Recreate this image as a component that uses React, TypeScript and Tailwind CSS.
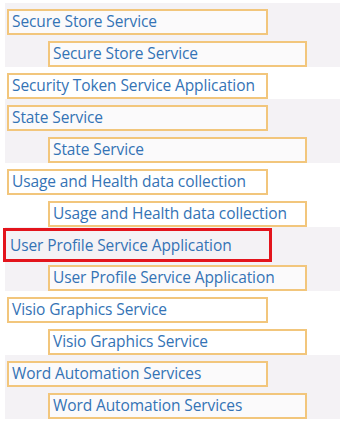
import React from 'react';

type Group = { name: string; child: boolean; shaded: boolean; highlight?: boolean };

const groups: Group[] = [
    { name: 'Secure Store Service', child: true, shaded: true },
    { name: 'Security Token Service Application', child: false, shaded: false },
    { name: 'State Service', child: true, shaded: true },
    { name: 'Usage and Health data collection', child: true, shaded: false },
    { name: 'User Profile Service Application', child: true, shaded: true, highlight: true },
    { name: 'Visio Graphics Service', child: true, shaded: false },
    { name: 'Word Automation Services', child: true, shaded: true },
];

const Box = ({ label, indent, highlight }: { label: string; indent?: boolean; highlight?: boolean }) => (
    <div className={`h-[32px] pt-[6px] ${indent ? 'pl-[48px]' : 'pl-[7px]'}`}>
        <div
            className={`relative h-[26px] flex items-center px-[3px] text-[15.5px] tracking-[-0.1px] text-[#3473b5] ${
                indent ? 'w-[259px]' : 'w-[261px]'
            } ${highlight ? '' : 'border-2 border-[#f2c67c] bg-white/60'}`}
        >
            <span className="whitespace-nowrap">{label}</span>
            {highlight && (
                <div className="absolute -left-[4px] -top-[5px] w-[269px] h-[34px] border-[3px] border-[#e3141c]" />
            )}
        </div>
    </div>
);

export default function App() {
    return (
        <div className="w-[351px] h-[429px] bg-white pt-[3px]" style={{ fontFamily: '"Open Sans", "Noto Sans", sans-serif' }}>
            {groups.map((g, i) => (
                <div key={i} className={`mx-[5px] w-[335px] ${g.shaded ? 'bg-[#f4f2f5]' : ''}`}>
                    <div className="-mx-[5px]">
                        <Box label={g.name} highlight={g.highlight} />
                        {g.child && <Box label={g.name} indent />}
                    </div>
                </div>
            ))}
        </div>
    );
}
